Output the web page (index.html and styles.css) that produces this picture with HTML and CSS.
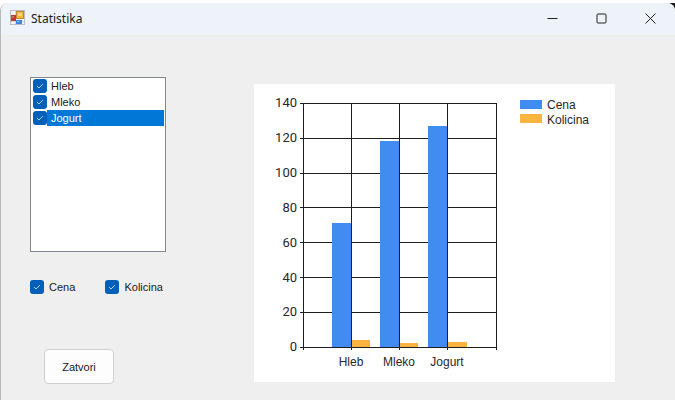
FILE: index.html
```html
<!DOCTYPE html>
<html lang="sr-Latn">
<head>
    <meta charset="UTF-8">
    <meta name="viewport" content="width=device-width, initial-scale=1.0">
    <title>Statistika</title>
    <link rel="stylesheet" href="styles.css">
</head>
<body>
    <div class="desktop">
    <div class="window">
        <header class="title-bar">
            <svg class="app-icon" width="16" height="16" viewBox="0 0 16 16" aria-hidden="true">
                <rect x="0.5" y="0.5" width="14" height="14" fill="#f4f5f6" stroke="#b9bdc3"/>
                <path d="M5.500 1v13M1 11.500h13" stroke="#d3d7dc"/>
                <rect x="1" y="5" width="5" height="6" fill="#c0392f"/>
                <rect x="2" y="6" width="2" height="2" fill="#dc6a60"/>
                <rect x="6.500" y="1.500" width="7" height="7" fill="#f3b53a" stroke="#c08a2e"/>
                <rect x="8" y="3" width="4" height="3" fill="#fbd57b"/>
                <rect x="6" y="10" width="6" height="4" fill="#3f86de"/>
                <rect x="7" y="11" width="2" height="1" fill="#94c2f5"/>
            </svg>
            <h1>Statistika</h1>
            <div class="window-buttons">
                <button type="button" aria-label="Minimize">
                    <svg width="11" height="11" viewBox="0 0 11 11"><path d="M0.500 5.500h10"/></svg>
                </button>
                <button type="button" aria-label="Maximize">
                    <svg width="11" height="11" viewBox="0 0 11 11"><rect x="1" y="1" width="9" height="9" rx="1"/></svg>
                </button>
                <button type="button" aria-label="Close">
                    <svg width="11" height="11" viewBox="0 0 11 11"><path d="M0.500 0.500l10 10M10.500 0.500l-10 10"/></svg>
                </button>
            </div>
        </header>

        <main class="content">
            <form class="options">
                <div class="list-box">
                    <label><input type="checkbox" checked><span>Hleb</span></label>
                    <label><input type="checkbox" checked><span>Mleko</span></label>
                    <label class="selected"><input type="checkbox" checked><span>Jogurt</span></label>
                </div>
                <div class="series">
                    <label><input type="checkbox" checked>Cena</label>
                    <label><input type="checkbox" checked>Kolicina</label>
                </div>
                <button type="button" class="close-button">Zatvori</button>
            </form>

            <svg class="chart" viewBox="0 0 361 298" role="img" aria-label="Cena, Kolicina">
                <path class="grid" d="M46 19H242M46 54H242M46 89H242M46 123H242M46 158H242M46 193H242M46 228H242"/>
                <g class="cena">
                    <rect x="78" y="139" width="19" height="124"/>
                    <rect x="126" y="57" width="19" height="206"/>
                    <rect x="174" y="42" width="19" height="221"/>
                    <rect x="266" y="16" width="22" height="9"/>
                </g>
                <g class="kolicina">
                    <rect x="97" y="256" width="19" height="7"/>
                    <rect x="145" y="259" width="19" height="4"/>
                    <rect x="193" y="258" width="20" height="5"/>
                    <rect x="266" y="30" width="22" height="9"/>
                </g>
                <path class="grid" d="M46 263H242M49 19V266M97 19V266M145 19V266M193 19V266M242 19V266"/>
                <g class="values">
                    <text x="43" y="23">140</text>
                    <text x="43" y="58">120</text>
                    <text x="43" y="93">100</text>
                    <text x="43" y="128">80</text>
                    <text x="43" y="163">60</text>
                    <text x="43" y="198">40</text>
                    <text x="43" y="232">20</text>
                    <text x="43" y="267">0</text>
                </g>
                <g class="names">
                    <text x="97" y="282">Hleb</text>
                    <text x="145" y="282">Mleko</text>
                    <text x="193" y="282">Jogurt</text>
                </g>
                <g class="legend">
                    <text x="293" y="25">Cena</text>
                    <text x="293" y="40">Kolicina</text>
                </g>
            </svg>
        </main>
    </div>
    </div>
</body>
</html>
```

FILE: styles.css
```css
* {
    box-sizing: border-box;
}
body {
    margin: 0;
    padding-top: 3px;
    background-color: rgb(255, 255, 255);
    font-family: "Liberation Sans", Arial, sans-serif;
    font-size: 11px;
    color: rgb(26, 26, 26);
}
.desktop {
    background: linear-gradient(to right, rgb(255, 255, 255) 50%, rgb(30, 30, 30) 50%);
}
.window {
    min-height: calc(100vh - 3px);
    background-color: rgb(239, 239, 239);
    border-left: 1px solid rgb(184, 184, 186);
    border-radius: 8px 8px 0 0;
    overflow: hidden;
}
.title-bar {
    display: flex;
    align-items: center;
    height: 32px;
    padding: 0 0 2px 9px;
    background-color: rgb(238, 243, 249);
}
.title-bar h1 {
    margin: 0 0 0 5px;
    font-family: "Noto Sans", "Open Sans", sans-serif;
    font-size: 12px;
    font-weight: normal;
}
.window-buttons {
    display: flex;
    margin-left: auto;
}
.window-buttons button {
    display: flex;
    align-items: center;
    justify-content: center;
    width: 49px;
    height: 30px;
    padding: 0;
    border: none;
    background: none;
}
.window-buttons svg {
    fill: none;
    stroke: rgb(32, 32, 32);
}
.content {
    display: flex;
    align-items: flex-start;
    padding: 42px 60px 16px 29px;
}
.options {
    width: 136px;
    flex: none;
}
.list-box {
    height: 175px;
    padding: 0 1px;
    background-color: rgb(255, 255, 255);
    border: 1px solid rgb(130, 135, 144);
}
.list-box label {
    display: flex;
    align-items: center;
    height: 16px;
    padding-left: 1px;
}
.list-box span {
    flex: 1;
    height: 16px;
    padding-left: 4px;
    line-height: 16px;
}
.list-box .selected span {
    background-color: rgb(0, 120, 215);
    color: rgb(255, 255, 255);
}
input[type="checkbox"] {
    appearance: none;
    width: 14px;
    height: 14px;
    margin: 0;
    border-radius: 3px;
    background: rgb(0, 95, 184);
}
input[type="checkbox"]:checked {
    background-image: url("data:image/svg+xml,%3Csvg xmlns='http://www.w3.org/2000/svg' viewBox='0 0 14 14'%3E%3Cpath d='M4 7l2 2 4-4' fill='none' stroke='%23b4d0ec'/%3E%3C/svg%3E");
}
.series {
    display: flex;
    justify-content: space-between;
    margin-top: 28px;
    padding-right: 3px;
}
.series label {
    display: flex;
    align-items: center;
    gap: 5px;
}
.close-button {
    display: block;
    width: 70px;
    height: 35px;
    margin: 55px 0 0 14px;
    padding: 0;
    border: 1px solid rgb(208, 208, 208);
    border-radius: 4px;
    background-color: rgb(253, 253, 253);
    font: inherit;
    color: inherit;
}
.chart {
    flex: 1;
    min-width: 0;
    margin: 7px 0 0 88px;
    background-color: rgb(255, 255, 255);
    font-size: 12px;
    fill: rgb(40, 40, 40);
}
.grid {
    fill: none;
    stroke: rgb(30, 30, 30);
    shape-rendering: crispEdges;
}
.cena {
    fill: rgb(65, 140, 240);
}
.kolicina {
    fill: rgb(252, 180, 65);
}
.values {
    font-family: Roboto, sans-serif;
    font-size: 13px;
    text-anchor: end;
}
.names {
    text-anchor: middle;
}
```
